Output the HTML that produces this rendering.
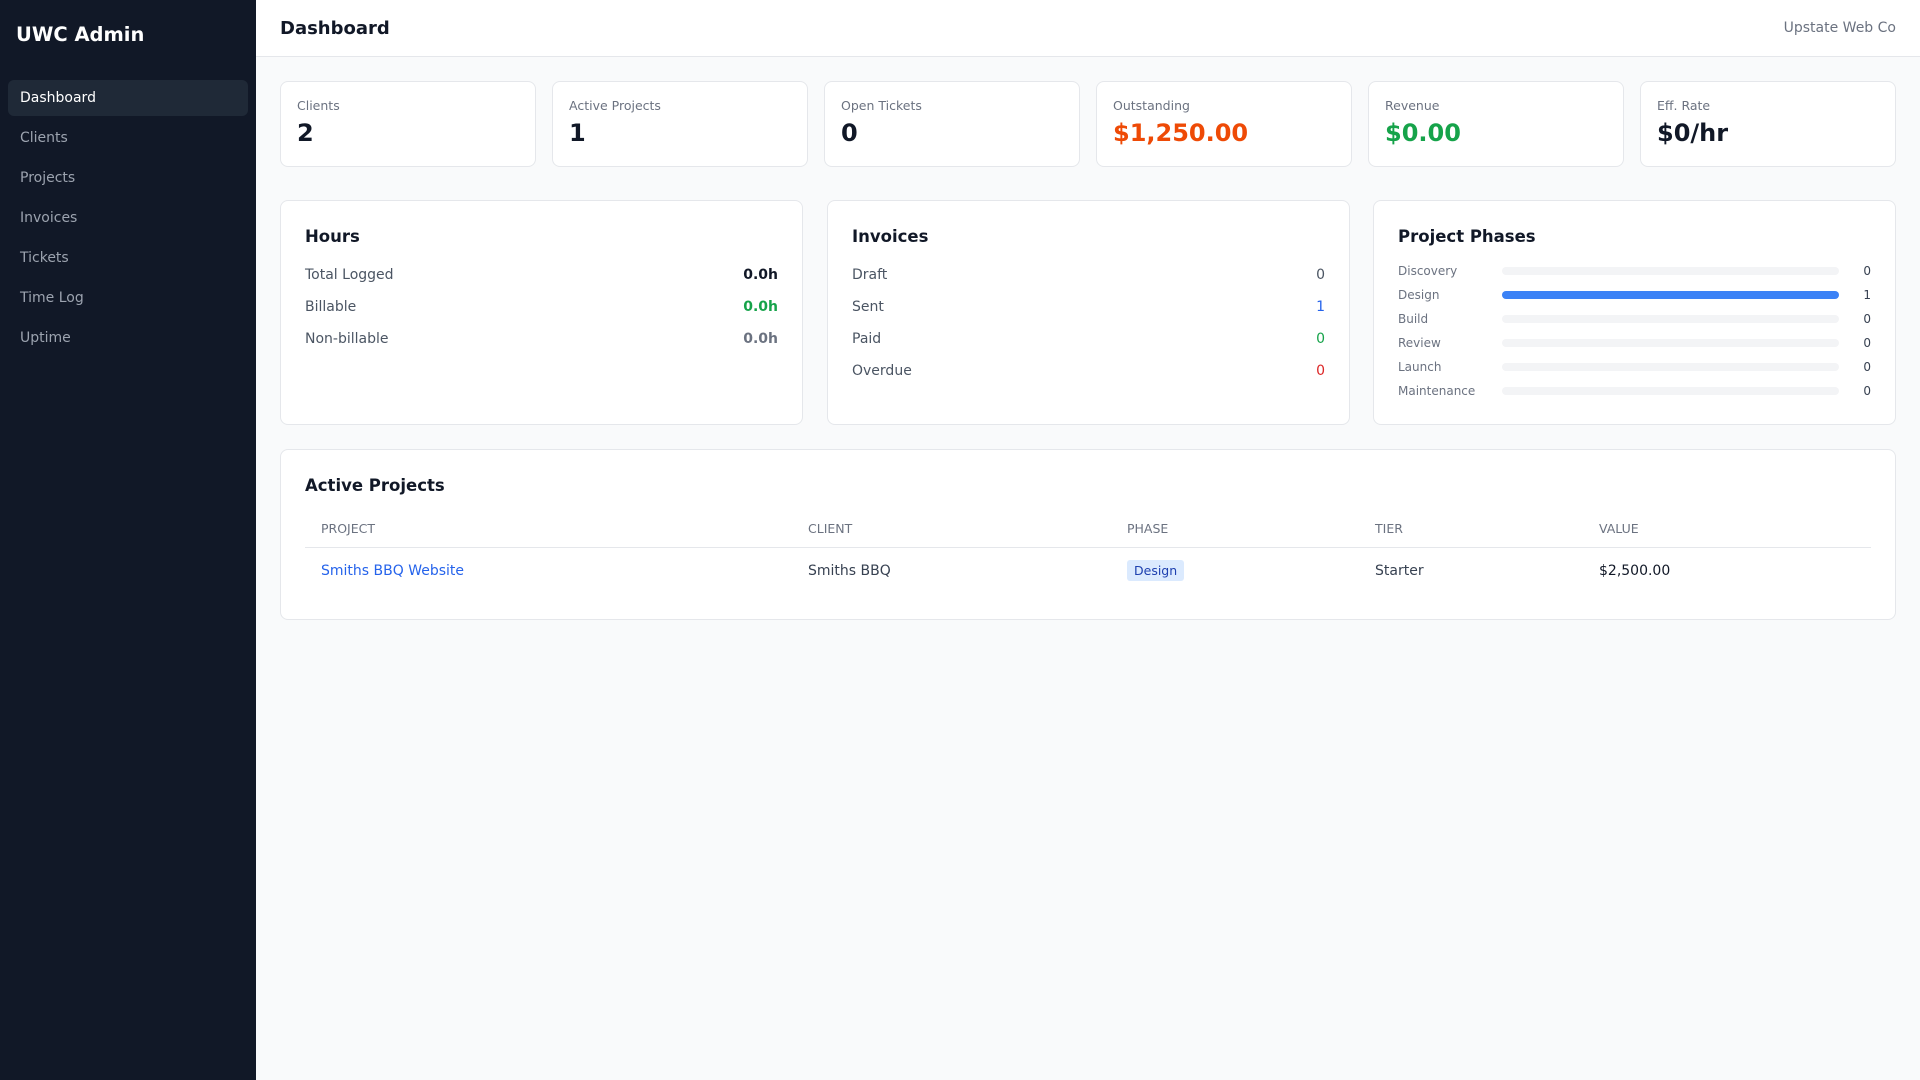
<!DOCTYPE html>
<html><head><meta charset="utf-8"><style>
*{box-sizing:border-box;margin:0;padding:0}
body{width:1920px;height:1080px;font-family:"DejaVu Sans","Liberation Sans",sans-serif;background:#f9fafb;color:#111827;position:relative;overflow:hidden}
.side{position:absolute;left:0;top:0;width:256px;height:1080px;background:#111827}
.brand{position:absolute;left:16px;top:23px;font-size:19.5px;font-weight:bold;color:#fff}
.nav{position:absolute;left:8px;top:80px;width:240px}
.nav div{height:36px;line-height:36px;padding-left:12px;font-size:14px;color:#9ca3af;margin-bottom:4px;border-radius:6px}
.nav .act{background:#1f2937;color:#fff}
.head{position:absolute;left:256px;top:0;right:0;height:57px;background:#fff;border-bottom:1px solid #e5e7eb}
.head h1{position:absolute;left:24px;top:18px;font-size:18px;font-weight:bold}
.head span{position:absolute;right:24px;top:20px;font-size:14px;color:#6b7280}
.card{position:absolute;background:#fff;border:1px solid #e5e7eb;border-radius:8px}
.stat{top:81px;width:256px;height:86px;padding:16px}
.stat .l{font-size:12.5px;color:#6b7280}
.stat .v{font-size:24px;font-weight:bold;margin-top:6px}
.big{top:200px;width:523px;height:225px;padding:24px}
.big h2{font-size:16.5px;font-weight:bold;margin-top:2px;margin-bottom:13px}
.row{display:flex;justify-content:space-between;font-size:14px;color:#4b5563;height:32px;line-height:32px}
.row b{font-weight:bold}
.ph{display:flex;align-items:center;height:24px;font-size:12px;color:#6b7280}
.ph .n{width:104px}
.ph .bar{flex:1;height:8px;border-radius:4px;background:#f3f4f6}
.ph .c{width:32px;text-align:right;color:#374151}
table{border-collapse:collapse;width:100%;margin-top:15px}
th{text-align:left;font-size:12.5px;font-weight:normal;color:#6b7280;padding:0 16px;height:37px;border-bottom:1px solid #e5e7eb}
td{font-size:14px;color:#374151;padding:0 16px;height:48px}
</style></head><body>
<div class="side"><div class="brand">UWC Admin</div>
<div class="nav"><div class="act">Dashboard</div><div>Clients</div><div>Projects</div><div>Invoices</div><div>Tickets</div><div>Time Log</div><div>Uptime</div></div></div>
<div class="head"><h1>Dashboard</h1><span>Upstate Web Co</span></div>

<div class="card stat" style="left:280px"><div class="l">Clients</div><div class="v">2</div></div>
<div class="card stat" style="left:552px"><div class="l">Active Projects</div><div class="v">1</div></div>
<div class="card stat" style="left:824px"><div class="l">Open Tickets</div><div class="v">0</div></div>
<div class="card stat" style="left:1096px"><div class="l">Outstanding</div><div class="v" style="color:#ee4a06">$1,250.00</div></div>
<div class="card stat" style="left:1368px"><div class="l">Revenue</div><div class="v" style="color:#16a34a">$0.00</div></div>
<div class="card stat" style="left:1640px"><div class="l">Eff. Rate</div><div class="v">$0/hr</div></div>

<div class="card big" style="left:280px"><h2>Hours</h2>
<div class="row"><span>Total Logged</span><b style="color:#111827">0.0h</b></div>
<div class="row"><span>Billable</span><b style="color:#16a34a">0.0h</b></div>
<div class="row"><span>Non-billable</span><b style="color:#6b7280">0.0h</b></div></div>
<div class="card big" style="left:827px"><h2>Invoices</h2>
<div class="row"><span>Draft</span><span>0</span></div>
<div class="row"><span>Sent</span><span style="color:#2563eb">1</span></div>
<div class="row"><span>Paid</span><span style="color:#16a34a">0</span></div>
<div class="row"><span>Overdue</span><span style="color:#dc2626">0</span></div></div>
<div class="card big" style="left:1373px"><h2 style="margin-bottom:13px">Project Phases</h2>
<div class="ph"><span class="n">Discovery</span><div class="bar"></div><span class="c">0</span></div>
<div class="ph"><span class="n">Design</span><div class="bar" style="background:#3b82f6"></div><span class="c">1</span></div>
<div class="ph"><span class="n">Build</span><div class="bar"></div><span class="c">0</span></div>
<div class="ph"><span class="n">Review</span><div class="bar"></div><span class="c">0</span></div>
<div class="ph"><span class="n">Launch</span><div class="bar"></div><span class="c">0</span></div>
<div class="ph"><span class="n">Maintenance</span><div class="bar"></div><span class="c">0</span></div></div>

<div class="card" style="left:280px;top:449px;width:1616px;height:171px;padding:24px">
<h2 style="font-size:16.5px;font-weight:bold;margin-top:2px">Active Projects</h2>
<table><tr><th style="width:487px">PROJECT</th><th style="width:319px">CLIENT</th><th style="width:248px">PHASE</th><th style="width:224px">TIER</th><th>VALUE</th></tr>
<tr><td style="color:#2563eb">Smiths BBQ Website</td><td>Smiths BBQ</td><td><span style="background:#dbeafe;color:#1e40af;font-size:12.5px;padding:3px 7px;border-radius:3px">Design</span></td><td>Starter</td><td style="color:#111827">$2,500.00</td></tr></table>
</div>
</body></html>
